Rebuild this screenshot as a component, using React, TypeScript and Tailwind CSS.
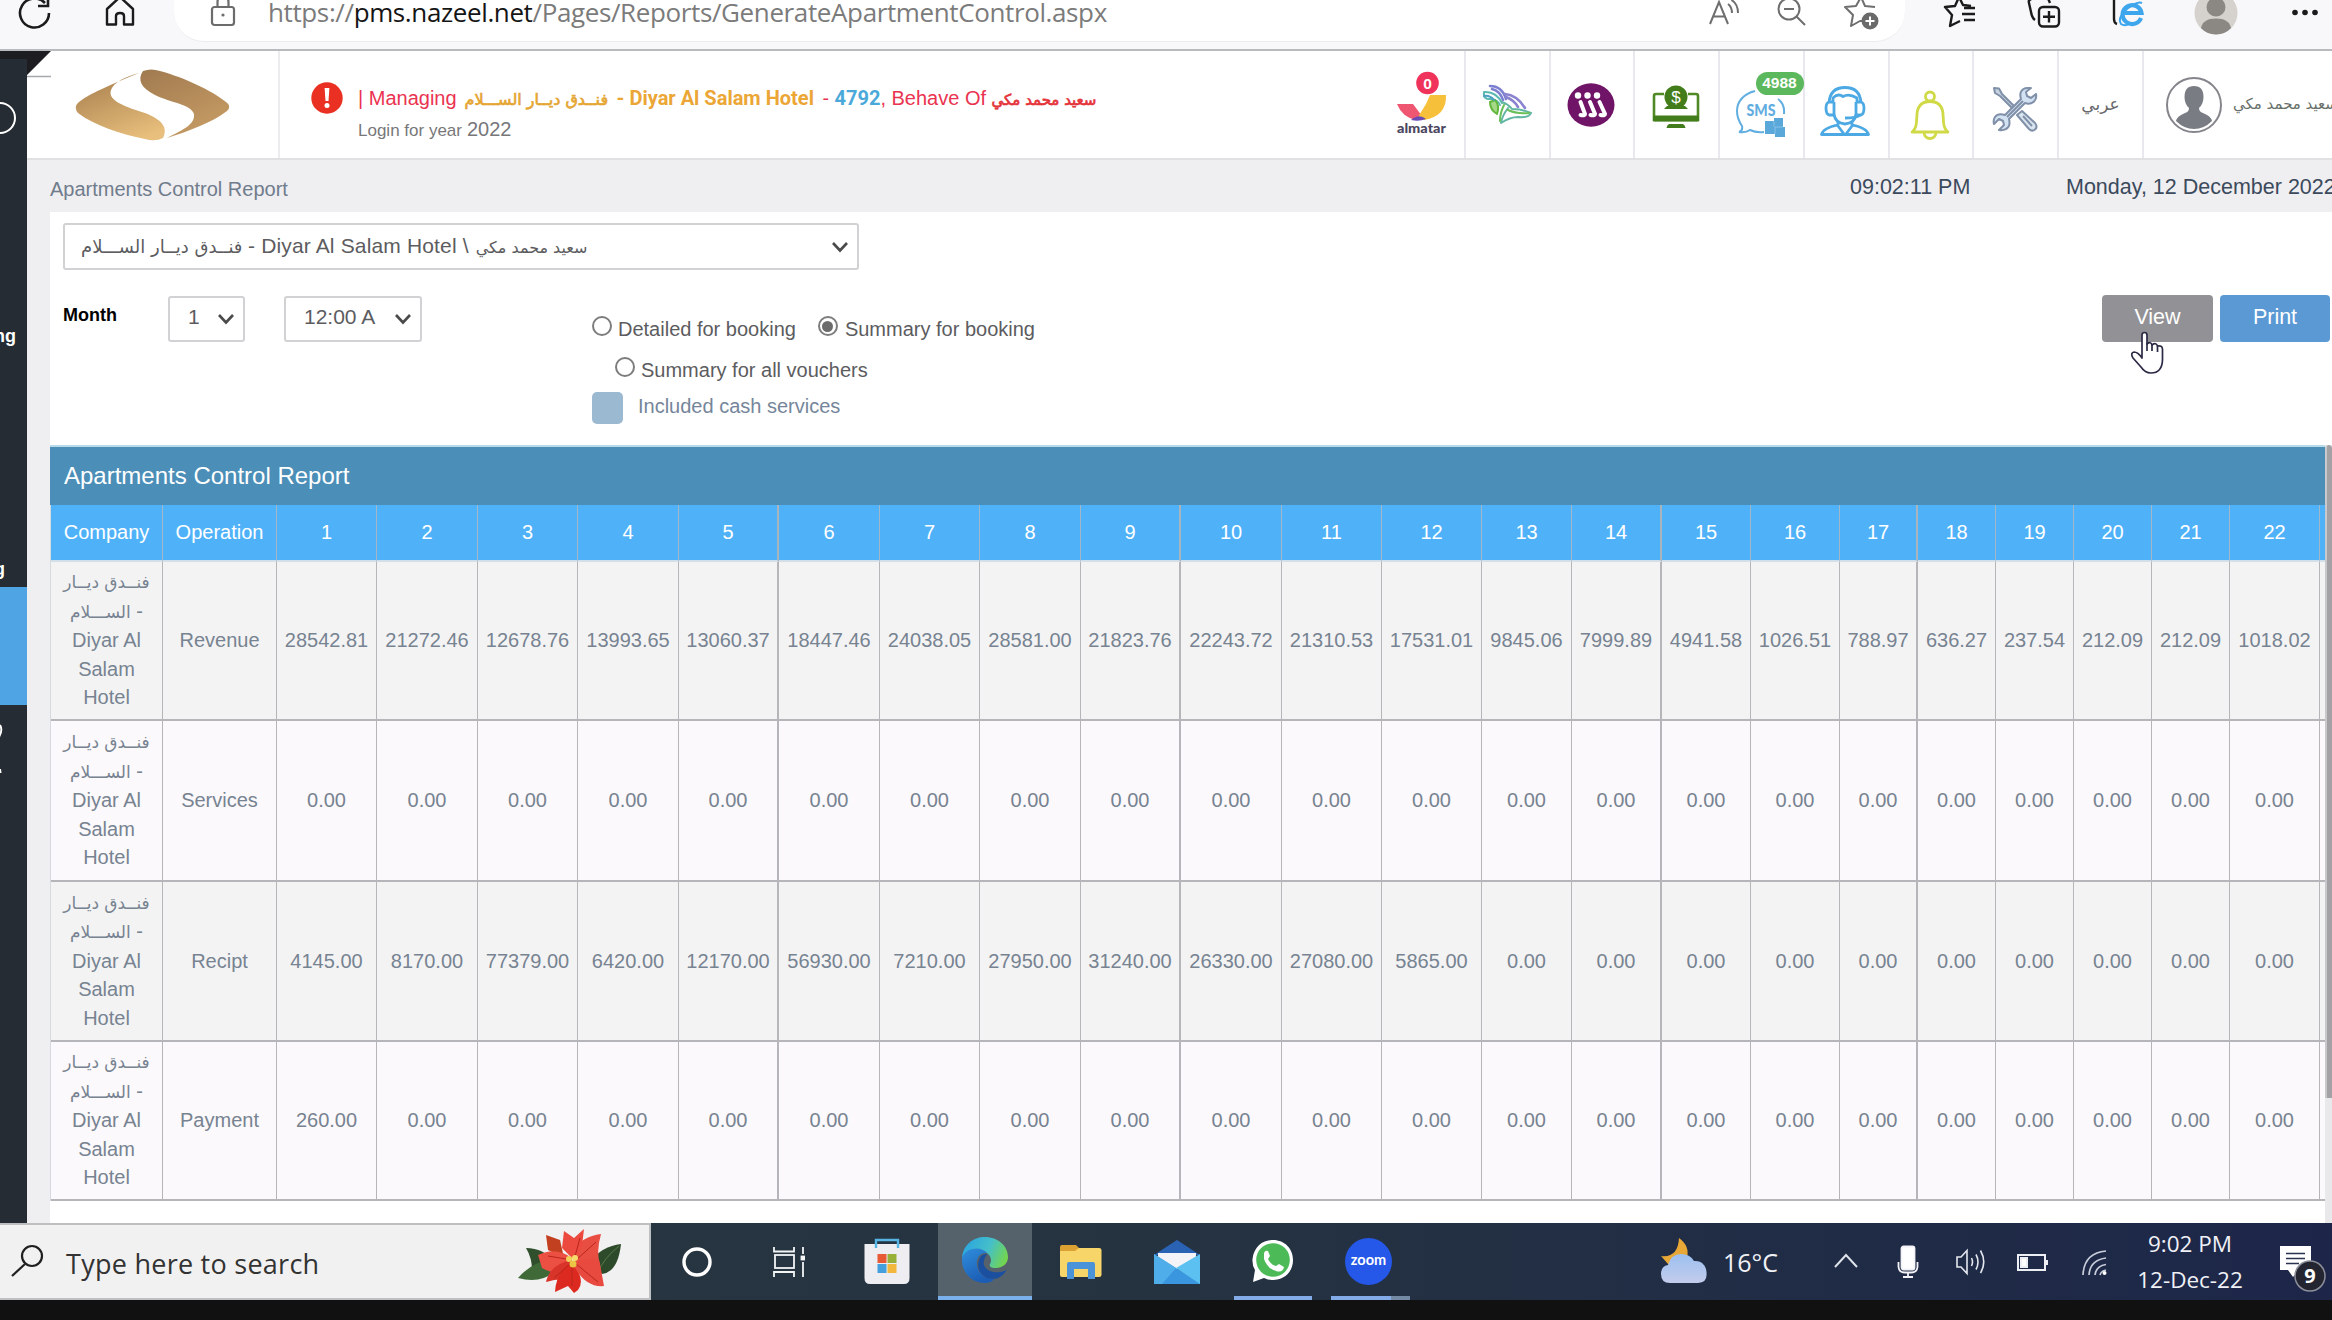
import React from "react";

const LATIN = "font-['Liberation_Sans','DejaVu_Sans',sans-serif]";
const SEGOE = "font-['Open_Sans','Noto_Sans',sans-serif]";

/* ---------- Browser toolbar ---------- */

function BrowserBar() {
  return (
    <div className="flex h-[49px] w-full shrink-0 overflow-hidden bg-[#f8f7fa]">
      <svg className="ml-[17px] h-[30px] w-[38px] shrink-0" viewBox="0 0 38 30" fill="none" stroke="#1b1b1b" strokeWidth="2.6">
        <path d="M28 3 A14.5 14.5 0 1 0 32 13" />
        <path d="M31 -3 V6 H21" />
      </svg>
      <svg className="ml-[49px] h-[30px] w-[32px] shrink-0" viewBox="0 0 32 30" fill="none" stroke="#1b1b1b" strokeWidth="2.4" strokeLinejoin="round">
        <path d="M3 9 L16 -3 L29 9 V24.5 H20 V16 Q20 13 16 13 Q12 13 12 16 V24.5 H3 Z" />
      </svg>
      <div className="ml-[38px] flex h-[42px] w-[1731px] shrink-0 items-start overflow-hidden rounded-b-[30px] border-b border-[#ececee] bg-white">
        <svg className="ml-[36px] h-[28px] w-[26px] shrink-0" viewBox="0 0 26 28" fill="none" stroke="#6c6c6c" strokeWidth="2.2">
          <rect x="2" y="7" width="22" height="18" rx="2.5" />
          <path d="M7.5 7 V2 Q7.5 -3 13 -3 Q18.500 -3 18.500 2 V7" />
          <circle cx="13" cy="15" r="1.6" fill="#6c6c6c" stroke="none" />
        </svg>
        <div className={`${SEGOE} ml-[32px] w-[1439px] shrink-0 text-[26px] leading-[25px] tracking-[-0.38px] whitespace-nowrap text-[#7b7b7b]`}>
          <span>https://</span>
          <span className="text-[#151515]">pms.nazeel.net</span>
          <span>/Pages/Reports/GenerateApartmentControl.aspx</span>
        </div>
        <svg className="h-[28px] w-[34px] shrink-0" viewBox="0 0 34 28" fill="none" stroke="#6e6e6e" strokeWidth="2">
          <path d="M3 24 L12 2 L21 24 M6 16.500 H18" />
          <path d="M21 4 Q25 7 25 13 M24.500 0 Q31 4 31 13" />
        </svg>
        <svg className="ml-[35px] h-[28px] w-[32px] shrink-0" viewBox="0 0 32 28" fill="none" stroke="#6e6e6e" strokeWidth="2">
          <circle cx="13" cy="9" r="10.500" />
          <path d="M8 9 H18 M20.500 16.500 L29 25" />
        </svg>
        <svg className="ml-[36px] h-[31px] w-[38px] shrink-0" viewBox="0 0 38 31" fill="none" stroke="#6e6e6e" strokeWidth="2" strokeLinejoin="round">
          <path d="M20 21 L16 21 L7 26 L9 15 L1 7 L12 6 L17 -3 L21 6 L31 7" />
          <circle cx="26" cy="21" r="8.500" fill="#6a6a6a" stroke="none" />
          <path d="M26 16.500 V25.500 M21.500 21 H30.500" stroke="#fff" />
        </svg>
      </div>
      <svg className="ml-[38px] h-[30px] w-[36px] shrink-0" viewBox="0 0 36 30" fill="none" stroke="#1b1b1b" strokeWidth="2.4" strokeLinejoin="round">
        <path d="M17 21 L7 26 L9 15 L2 7 L12 6 L16 -3 L20 5 L28 6" />
        <path d="M21 8 H32 M19 14 H32 M21 20 H32" />
      </svg>
      <svg className="ml-[48px] h-[30px] w-[38px] shrink-0" viewBox="0 0 38 30" fill="none" stroke="#1b1b1b" strokeWidth="2.4" strokeLinejoin="round">
        <path d="M8 20 Q5 18 4 12 L2 3 Q1 0 4 -1 L20 -4 L23 3" />
        <rect x="12" y="7" width="20" height="19.500" rx="4" />
        <path d="M22 11 V22.500 M16 16.700 H28" />
      </svg>
      <svg className="ml-[47px] h-[30px] w-[36px] shrink-0" viewBox="0 0 36 30" fill="none">
        <path d="M5 24 Q2 23 2 19 V-3" stroke="#1b1b1b" strokeWidth="2.4" />
        <path d="M29 18 A9.500 9.500 0 1 1 29.500 13 H12" stroke="#3ea6ec" strokeWidth="4.200" />
        <path d="M30 3 Q25 1 15 9 Q5 18 9 24 Q13 27 20 23" stroke="#3ea6ec" strokeWidth="2" />
      </svg>
      <svg className="ml-[46px] h-[36px] w-[44px] shrink-0" viewBox="0 0 44 36">
        <circle cx="22" cy="13" r="21.500" fill="#d5d2ce" />
        <circle cx="22" cy="7" r="9.500" fill="#8b8783" />
        <path d="M7 28 Q9 18.500 22 18.500 Q35 18.500 37 28 Q31 34.500 22 34.500 Q13 34.500 7 28Z" fill="#8b8783" />
      </svg>
      <svg className="ml-[51px] h-[30px] w-[34px] shrink-0" viewBox="0 0 34 30" fill="#1b1b1b">
        <circle cx="6" cy="12.500" r="2.800" />
        <circle cx="16" cy="12.500" r="2.800" />
        <circle cx="26" cy="12.500" r="2.800" />
      </svg>
    </div>
  );
}

/* ---------- Left menu strip ---------- */

function SideStrip() {
  return (
    <div className={`${LATIN} flex w-[27px] shrink-0 flex-col overflow-hidden bg-[#252c33] text-[18px] font-bold text-white`}>
      <div className="h-[8px] shrink-0 bg-[#1c1d20]" />
      <svg className="mt-[42px] h-[34px] w-[18px] shrink-0" viewBox="0 0 18 34" fill="none">
        <circle cx="0" cy="17" r="15" stroke="#fff" strokeWidth="2" />
      </svg>
      <div className="mt-[189px] ml-[-6px] h-[24px] leading-[24px]">ng</div>
      <div className="mt-[209px] ml-[-6px] h-[24px] leading-[24px]">g</div>
      <div className="mt-[6px] h-[118px] shrink-0 bg-[#4fa5e3]" />
      <svg className="mt-[18px] h-[52px] w-[6px] shrink-0" viewBox="0 0 6 52" fill="none" stroke="#fff" strokeWidth="2">
        <path d="M0 2 Q3 7 -1 14" />
        <path d="M0 46 L0.500 50" />
      </svg>
    </div>
  );
}

/* ---------- Application header ---------- */

function Logo() {
  return (
    <svg className="h-[74px] w-[160px]" viewBox="0 0 160 74">
      <defs>
        <linearGradient id="goldL" x1="0.2" y1="0" x2="0.7" y2="1">
          <stop offset="0" stopColor="#a9804f" />
          <stop offset="1" stopColor="#e8bf7c" />
        </linearGradient>
        <linearGradient id="goldR" x1="0" y1="0" x2="0.6" y2="1">
          <stop offset="0" stopColor="#a07a50" />
          <stop offset="1" stopColor="#c59a63" />
        </linearGradient>
      </defs>
      <path d="M66 5 C40 16 14 26 4 36 Q1 40 5 45 C22 58 48 66 72 71 Q82 74 90 70 C95 60 90 52 72 45 C46 37 35 31 38 22 C41 14 52 9 66 5Z" fill="url(#goldL)" />
      <path d="M70 3 Q78 0 87 3 C112 10 138 22 153 34 Q159 38 154 43 C140 54 116 63 94 70 C112 61 122 56 121 46 C118 36 98 35 82 27 C68 20 64 12 70 3Z" fill="url(#goldR)" />
    </svg>
  );
}

function AlmatarIcon() {
  return (
    <svg className="h-[70px] w-[56px]" viewBox="0 0 56 70">
      <path d="M3 34 H19 L28 46 L22 50 Q8 47 3 34Z" fill="#ee5672" />
      <path d="M32 34 L36 25 H52 Q53 46 30 50 L24 47Z" fill="#f6c03a" />
      <path d="M17 50 Q25 43 32 49 Q25 52 17 50Z" fill="#6a4bb5" />
      <text x="27.500" y="63" textAnchor="middle" textLength="49" lengthAdjust="spacingAndGlyphs" fontFamily="Lato, sans-serif" fontWeight="900" fontSize="14" fill="#4b4660">almatar</text>
      <circle cx="33.500" cy="13" r="11.300" fill="#ef335b" />
      <text x="33.500" y="18.500" textAnchor="middle" fontFamily="Liberation Sans, sans-serif" fontWeight="700" fontSize="15.500" fill="#fff">0</text>
    </svg>
  );
}

function BirdIcon() {
  return (
    <svg className="h-[44px] w-[52px]" viewBox="0 0 52 44" fill="none" strokeLinecap="round" strokeLinejoin="round" strokeWidth="2">
      <path d="M8 3 Q20 3 24 16 M10 6 Q18 8 21 17" stroke="#7d7fd0" strokeWidth="2.600" />
      <path d="M2 9 Q14 8 20 20 M2 9 Q1 17 9 16 Q16 17 18 22" stroke="#5cb9b0" />
      <path d="M8 19 Q8 27 15 31 Q18 22 13 17 Z" stroke="#62b83e" fill="#a6d888" />
      <path d="M23 11 Q35 12 43 25 M24 14 Q32 17 36 24" stroke="#8a83cf" strokeWidth="2.600" />
      <path d="M20 19 Q26 21 30 26 Q40 26 49 30 Q47 35 36 34 Q28 34 19 40 Q20 33 26 25" stroke="#62b7a4" />
      <path d="M22 22 Q18 30 18 38 M26 27 Q34 31 47 30" stroke="#69bf5a" />
      <path d="M2 13 Q8 12 12 17" stroke="#4f9fc4" />
    </svg>
  );
}

function PurpleIcon() {
  return (
    <svg className="h-[46px] w-[48px]" viewBox="0 0 48 46" fill="none" stroke="#fff" strokeWidth="4" strokeLinecap="round">
      <ellipse cx="24" cy="23" rx="23.500" ry="21.700" fill="#701467" stroke="none" />
      <circle cx="11" cy="13.500" r="3.200" fill="#fff" stroke="none" />
      <circle cx="20.500" cy="13.500" r="3.200" fill="#fff" stroke="none" />
      <circle cx="30" cy="13.500" r="3.200" fill="#fff" stroke="none" />
      <path d="M13.500 20 L18 32 Q18 34 13.500 33" />
      <path d="M23 20 L28 32 Q28 34 23.500 33" />
      <path d="M32.500 20 L38 32 Q38 34 33.500 33" />
    </svg>
  );
}

function PayMonitorIcon() {
  return (
    <svg className="h-[46px] w-[48px]" viewBox="0 0 48 46" fill="none">
      <path d="M12 10 H4 Q2 10 2 12 V36 H46 V12 Q46 10 44 10 H36" stroke="#508a26" strokeWidth="2.600" />
      <rect x="1" y="31.500" width="46" height="6" rx="1.500" fill="#427c1b" />
      <path d="M17 40 H31 Q33 41 33.500 44 H14.500 Q15 41 17 40Z" fill="#427c1b" />
      <circle cx="24" cy="13" r="11.500" fill="#427c1b" />
      <path d="M15 22 H33 L36 25 H12Z" fill="#427c1b" />
      <text x="24" y="19" textAnchor="middle" fontFamily="Liberation Sans, sans-serif" fontSize="17" fill="#fff">$</text>
    </svg>
  );
}

function SmsIcon() {
  return (
    <div className="relative flex h-[66px] w-[50px] items-end">
      <svg className="h-[50px] w-[50px]" viewBox="0 0 50 50" fill="none">
        <path d="M19 3 C7 6 1 14 1 23 C1 30 4 35 6 38 Q7 43 3 44 Q10 45 14 42 Q20 45 28 44 M42 11 Q49 16 48 26" stroke="#61aee0" strokeWidth="2" />
        <text x="25" y="28" textAnchor="middle" textLength="29" lengthAdjust="spacingAndGlyphs" fontFamily="Lato, sans-serif" fontWeight="900" fontSize="16" fill="#62ade0">SMS</text>
        <path d="M29 33 L38 33 V30 H47 V39 H49 V49 H39 V46 H29Z" fill="#5aa7da" />
        <path d="M38 33 V39 M39 46 V39 H47" stroke="#86c1e8" />
      </svg>
      <div className={`${LATIN} absolute top-0 left-[20px] flex h-[23px] w-[48px] items-center justify-center rounded-full bg-[#5cb85c] text-[15.500px] font-bold text-white`}>4988</div>
    </div>
  );
}

function SupportIcon() {
  return (
    <svg className="h-[50px] w-[50px]" viewBox="0 0 50 50" fill="none" stroke="#4da9e4" strokeWidth="2.800" strokeLinejoin="round">
      <path d="M9 17 Q10 1.500 25 1.500 Q40 1.500 41 17" />
      <path d="M13 17 V12 Q18 7 23 10.500 Q29 7 37 12 V17" />
      <path d="M14 16 V28 Q15 37 25 38 Q35 37 36 28 V16" />
      <path d="M14 16 H9 Q6 17 6 22 Q6 28 9 29 H14 M36 16 H41 Q44 17 44 22 Q44 28 41 29 H36" />
      <path d="M40 29 Q37 32 25 32" />
      <path d="M18 36 V40 L24 48 M32 36 V40 L26 48 M18 39 Q3 42 1.500 48.500 H48.500 Q47 42 32 39" />
    </svg>
  );
}

function BellIcon() {
  return (
    <svg className="h-[50px] w-[40px]" viewBox="0 0 40 50" fill="none" stroke="#d0d946" strokeWidth="2.800" strokeLinejoin="round">
      <circle cx="20" cy="6.500" r="4.500" />
      <path d="M2 42 H38 Q34 39 33.500 32 L33 24 Q32 11.500 20 11.500 Q8 11.500 7 24 L6.500 32 Q6 39 2 42Z" />
      <path d="M14 43 Q15 48.500 20 48.500 Q25 48.500 26 43" />
    </svg>
  );
}

function ToolsIcon() {
  return (
    <svg className="h-[46px] w-[46px]" viewBox="0 0 46 46" strokeLinejoin="round" strokeWidth="2" stroke="#7f90a8">
      <path d="M2 2 L7 2.500 L10 8 L24 22 L22 24 L8 10 L3 7Z" fill="#c8d4e2" />
      <path d="M25 29 L30 25 L43 37 Q46 41 43 43.500 Q40 46 37 43Z" fill="#dbe5f0" />
      <path d="M31 30 L40 40" />
      <path d="M36 2 Q30 2 28.500 7 Q28 10 29 13 L13 29 Q6 27 3 31 Q1 34 2 38 L7 33 L11 35 L12 39 L7 44 Q14 45 17 40 Q18 37 17 33 L33 17 Q38 19 42 15.500 Q45 12 44 8 L39 12 L35 10 L34 6 L39 2Z" fill="#d3e2f2" />
      <path d="M15 31 L31 15" />
    </svg>
  );
}

function UserAvatar() {
  return (
    <svg className="h-[58px] w-[58px] shrink-0" viewBox="0 0 58 58">
      <circle cx="29" cy="29" r="27" fill="#fff" stroke="#85858c" strokeWidth="2" />
      <path d="M29 10 Q38.500 10 38.500 21 Q38.500 28 34 32 Q34 36 38 37 Q46 40 47 45 Q39 53 29 53 Q19 53 11 45 Q12 40 20 37 Q24 36 24 32 Q19.500 28 19.500 21 Q19.500 10 29 10Z" fill="#7a7c84" />
    </svg>
  );
}

const TOOLBAR = [
  { id: "almatar", node: <AlmatarIcon />, cell: "w-[85px] pr-[2px]" },
  { id: "bird", node: <BirdIcon />, cell: "w-[85px]" },
  { id: "purple", node: <PurpleIcon />, cell: "w-[84px] pr-[2px]" },
  { id: "pay", node: <PayMonitorIcon />, cell: "w-[85px] pt-[4px] pr-[2px]" },
  { id: "sms", node: <SmsIcon />, cell: "w-[85px] pr-[2px]" },
  { id: "support", node: <SupportIcon />, cell: "w-[85px] pt-[13px] pr-[3px]" },
  { id: "bell", node: <BellIcon />, cell: "w-[84px] pt-[20px] pr-[2px]" },
  { id: "tools", node: <ToolsIcon />, cell: "w-[85px] pt-[8px] pr-[2px]" },
];

function AppHeader() {
  return (
    <div className="flex h-[109px] shrink-0 overflow-hidden border-b-2 border-[#e1e1e4] bg-white">
      <div className="flex w-[253px] shrink-0 items-start border-r-2 border-[#ececef]">
        <svg className="h-[27px] w-[25px] shrink-0" viewBox="0 0 25 27">
          <path d="M0 0 H24 L0 24Z" fill="#1d1d21" />
          <path d="M0 25.500 H24" stroke="#a5a8ad" strokeWidth="1.500" />
        </svg>
        <div className="mt-[17px] ml-[21px]">
          <Logo />
        </div>
      </div>
      <div className="flex w-[1101px] shrink-0">
        <svg className="mt-[31px] ml-[31px] h-[32px] w-[32px] shrink-0" viewBox="0 0 32 32">
          <circle cx="16" cy="16" r="15.700" fill="#e93022" />
          <path d="M13.600 6 H18.400 L17.500 19 H14.500Z" fill="#fff" />
          <circle cx="16" cy="23.500" r="2.500" fill="#fff" />
        </svg>
        <div className="mt-[31px] ml-[15px]">
          <div className="flex h-[33px] items-baseline whitespace-pre font-['Roboto','Liberation_Sans',sans-serif] text-[20px] leading-[33px] text-[#ea3350]">
            <span className={LATIN}>| Managing</span>
            <span className="ml-[8px] w-[151px] font-['DejaVu_Sans'] text-[16px] text-[#e5a633] [-webkit-text-stroke:0.7px]">فنــدق ديــار الســـلام</span>
            <span className="ml-px font-bold text-[#eba636]">- Diyar Al Salam Hotel</span>
            <span className="ml-[9px]">-</span>
            <span className="ml-[6px] font-bold text-[#4ba9da]">4792</span>
            <span className={LATIN}>, Behave Of </span>
            <span className="font-['DejaVu_Sans'] text-[15px] text-[#e5333a] [-webkit-text-stroke:0.7px]">سعيد محمد مكي</span>
          </div>
          <div className={`${LATIN} flex items-baseline leading-[28px] text-[#77777a]`}>
            <span className="text-[17px]">Login for year</span>
            <span className="ml-[5px] text-[20px]">2022</span>
          </div>
        </div>
      </div>
      {TOOLBAR.map((t) => (
        <div key={t.id} className={`${t.cell} flex shrink-0 items-center justify-center border-r-2 border-[#e8e8ee]`}>
          {t.node}
        </div>
      ))}
      <div className="flex w-[85px] shrink-0 items-center justify-center border-r-2 border-[#e8e8ee] font-['DejaVu_Sans'] text-[17px] text-[#6a6a6e]">عربي</div>
      <div className="flex w-[200px] shrink-0 items-center pl-[21px]">
        <UserAvatar />
        <span className="ml-[10px] font-['DejaVu_Sans'] text-[15px] whitespace-nowrap text-[#67706a]">سعيد محمد مكي</span>
      </div>
    </div>
  );
}

/* ---------- Filter form ---------- */

function Chevron() {
  return (
    <svg className="h-[12px] w-[18px] shrink-0" viewBox="0 0 18 12" fill="none" stroke="#4a4a4a" strokeWidth="2.600">
      <path d="M2 2 L9 9.500 L16 2" />
    </svg>
  );
}

function Radio({ checked }: { checked?: boolean }) {
  return (
    <span className="flex h-[20px] w-[20px] shrink-0 items-center justify-center rounded-full border-2 border-[#7d7d7d] bg-white">
      {checked && <span className="h-[11px] w-[11px] rounded-full bg-[#6c6c6c]" />}
    </span>
  );
}

function Filters() {
  return (
    <div className={`${LATIN} flex h-[233px] shrink-0 flex-col bg-white pt-[11px] pl-[13px] text-[20px] text-[#5c5c60]`}>
      <div className="flex h-[47px] w-[796px] items-center justify-between rounded-[3px] border-2 border-[#d2d2d4] pr-[8px] pl-[16px] text-[21px] whitespace-pre">
        <div className="mb-[2px] flex items-baseline">
          <span className="w-[167px] font-['DejaVu_Sans'] text-[18px]">فنــدق ديــار الســـلام</span>
          <span className="tracking-[0.15px]">- Diyar Al Salam Hotel \ </span>
          <span className="ml-[1px] font-['DejaVu_Sans'] text-[16px]">سعيد محمد مكي</span>
        </div>
        <Chevron />
      </div>
      <div className="flex">
        <div className="mt-[33px] w-[105px] text-[18px] leading-[24px] font-bold text-black">Month</div>
        <div className="mt-[26px] flex h-[46px] w-[77px] items-center justify-between rounded-[3px] border-2 border-[#d2d2d4] pr-[8px] pl-[18px] text-[21px]">
          <span className="mb-[4px]">1</span>
          <Chevron />
        </div>
        <div className="mt-[26px] ml-[39px] flex h-[46px] w-[138px] items-center justify-between rounded-[3px] border-2 border-[#d2d2d4] pr-[8px] pl-[18px] text-[21px]">
          <span className="mb-[4px]">12:00 A</span>
          <Chevron />
        </div>
        <div className="ml-[170px] flex w-[800px] flex-col">
          <div className="mt-[46px] flex h-[24px]">
            <Radio />
            <span className="ml-[6px] leading-[26px]">Detailed for booking</span>
            <span className="ml-[22px] flex"><Radio checked /></span>
            <span className="ml-[7px] leading-[26px]">Summary for booking</span>
          </div>
          <div className="mt-[17px] ml-[23px] flex h-[24px]">
            <Radio />
            <span className="ml-[6px] leading-[26px]">Summary for all vouchers</span>
          </div>
          <div className="mt-[11px] flex h-[32px]">
            <span className="h-[32px] w-[31px] rounded-[5px] bg-[#9bb9d1]" />
            <span className="ml-[15px] leading-[28px] text-[#75869a]">Included cash services</span>
          </div>
        </div>
        <div className="mt-[25px] ml-[710px] flex gap-[7px] text-[21.500px] text-white">
          <div className="relative flex h-[47px] w-[111px] items-center justify-center rounded-[4px] bg-[#929195] pb-[2px]">
            View
            <svg className="absolute top-[36px] left-[28px] h-[44px] w-[35px]" viewBox="0 0 35 44" fill="#fff" stroke="#2a2a45" strokeWidth="1.700" strokeLinejoin="round">
              <path d="M12 4 Q12 1.500 14.500 1.500 Q17 1.500 17 4 V13 Q21 10 22 14 Q26 11 27.500 15 Q32 14 32.500 18 V29 Q32 42 21 42 Q15 42 11 36 L3 27 Q0 22 4 21 Q8 21 12 27Z" />
              <path d="M17 12 V20 M22 14 V20 M27.500 15 V21" fill="none" />
            </svg>
          </div>
          <div className="flex h-[47px] w-[110px] items-center justify-center rounded-[4px] bg-[#5b99d4] pb-[2px]">Print</div>
        </div>
      </div>
    </div>
  );
}

/* ---------- Report table ---------- */

const COLS = [112, 114, 100, 101, 100, 101, 100, 101, 100, 101, 100, 101, 100, 100, 90, 90, 89, 89, 78, 78, 78, 78, 78, 90, 6];

const ROWS = [
  {
    op: "Revenue",
    h: "h-[159px]",
    bg: "bg-[#f3f3f4]",
    values: "28542.81 21272.46 12678.76 13993.65 13060.37 18447.46 24038.05 28581.00 21823.76 22243.72 21310.53 17531.01 9845.06 7999.89 4941.58 1026.51 788.97 636.27 237.54 212.09 212.09 1018.02".split(" "),
  },
  { op: "Services", h: "h-[161px]", bg: "bg-[#fbf9fb]", values: Array<string>(22).fill("0.00") },
  {
    op: "Recipt",
    h: "h-[160px]",
    bg: "bg-[#f3f3f4]",
    values: "4145.00 8170.00 77379.00 6420.00 12170.00 56930.00 7210.00 27950.00 31240.00 26330.00 27080.00 5865.00 0.00 0.00 0.00 0.00 0.00 0.00 0.00 0.00 0.00 0.00".split(" "),
  },
  { op: "Payment", h: "h-[159px]", bg: "bg-[#fbf9fb]", values: ["260.00", ...Array<string>(21).fill("0.00")] },
];

const STRONG = new Set([5, 9, 14, 17]);

function ReportTable() {
  return (
    <div className={`${LATIN} flex grow`}>
      <div className="w-[2275px] shrink-0">
        <div className="h-[60px] border-t-2 border-[#b9dbe9] bg-[#4b8eb7] pl-[14px] text-[24px] leading-[58px] text-white">Apartments Control Report</div>
        <table className="w-[2275px] table-fixed border-separate border-spacing-0 border-l border-[#d4dade] text-center text-[20px] text-[#778391]">
          <colgroup>
            {COLS.map((w, i) => (
              <col key={i} style={{ width: w }} />
            ))}
          </colgroup>
          <thead>
            <tr className="h-[57px] bg-[#4fb2f9] text-white">
              {["Company", "Operation", ...Array.from({ length: 22 }, (_, i) => String(i + 1)), ""].map((h, i) => (
                <th key={i} className={`border-b-2 border-b-[#d3dfe8] p-0 pb-px font-normal ${i === 24 ? "" : STRONG.has(i - 1) ? "border-r-2 border-r-[#a9b4bd]" : "border-r border-r-[#a2b6c6]"}`}>
                  {h}
                </th>
              ))}
            </tr>
          </thead>
          <tbody>
            {ROWS.map((r) => (
              <tr key={r.op} className={`${r.h} ${r.bg}`}>
                <td className="border-r border-b-2 border-[#b6b6ba] p-0 pb-px leading-[28.500px]">
                  <div className="font-['DejaVu_Sans'] text-[17px]">فنــدق ديــار</div>
                  <div><span className="font-['DejaVu_Sans'] text-[17px]">الســـلام</span> -</div>
                  <div>Diyar Al</div>
                  <div>Salam</div>
                  <div>Hotel</div>
                </td>
                <td className="border-r border-b-2 border-[#b6b6ba] p-0 pb-px">{r.op}</td>
                {r.values.map((v, i) => (
                  <td key={i} className={`border-b-2 border-[#b6b6ba] p-0 pb-px ${STRONG.has(i + 1) ? "border-r-2" : "border-r"}`}>
                    {v}
                  </td>
                ))}
                <td className="border-b-2 border-[#b6b6ba] p-0" />
              </tr>
            ))}
          </tbody>
        </table>
      </div>
      <div className="w-[7px] bg-[#e9e9ec]">
        <div className="h-[653px] rounded-t-[4px] border-l-2 border-[#c9c9cc] bg-[#a3a1a5]" />
      </div>
    </div>
  );
}

/* ---------- Windows taskbar ---------- */

function Poinsettia() {
  return (
    <svg className="h-[66px] w-[104px]" viewBox="0 0 104 66">
      <path d="M8 20 Q26 20 36 34 Q26 44 14 42 Q14 30 8 20Z" fill="#30502d" />
      <path d="M0 50 Q14 34 32 32 L36 44 Q22 56 0 50Z" fill="#3f6a38" />
      <path d="M103 16 Q84 18 72 34 L84 46 Q100 44 103 16Z" fill="#2d4a2a" />
      <path d="M101 18 Q86 30 80 44" stroke="#597a4a" fill="none" />
      <path d="M28 7 L42 12 L46 30 L30 22Z" fill="#c2401f" />
      <path d="M83 6 Q64 8 54 24 L60 38 L82 36 Q78 24 83 6Z" fill="#e84f42" />
      <path d="M46 3 L56 10 L66 1 L64 18 L56 32 L44 20Z" fill="#ec4a3e" />
      <path d="M20 27 Q38 18 54 30 L50 46 Q34 46 24 40Z" fill="#ec5043" />
      <path d="M28 54 Q32 36 54 32 L54 52 Q40 50 28 54Z" fill="#d93429" />
      <path d="M37 64 Q38 44 54 34 Q68 52 60 62 L56 65 L50 58Z" fill="#dc2a20" />
      <path d="M86 58 Q66 60 54 34 Q82 26 82 36Z" fill="#e84a3f" />
      <path d="M54 32 L30 28 M56 32 L62 10 M57 33 L78 14 M57 35 L80 54 M52 36 L36 50 M54 36 L54 58" stroke="#b8251d" strokeWidth="1" fill="none" />
      <circle cx="51" cy="31" r="3" fill="#f3d25a" />
      <circle cx="57" cy="30" r="3" fill="#f7dc6c" />
      <circle cx="55" cy="36" r="3.500" fill="#edc544" />
    </svg>
  );
}

function EdgeIcon() {
  return (
    <svg className="h-[48px] w-[48px]" viewBox="0 0 48 48">
      <defs>
        <linearGradient id="edgeTop" x1="0" y1="0.3" x2="1" y2="0.6">
          <stop offset="0" stopColor="#2aa5e0" />
          <stop offset="0.550" stopColor="#45bfc9" />
          <stop offset="1" stopColor="#74d64c" />
        </linearGradient>
        <linearGradient id="edgeBody" x1="0" y1="0" x2="0.5" y2="1">
          <stop offset="0" stopColor="#2f8fdc" />
          <stop offset="1" stopColor="#1c5cb5" />
        </linearGradient>
      </defs>
      <path d="M1 22 C2 9 12 1 24 1 C37 1 47 10 47 21 C47 28 41 32 35 32 C29 32 28 30 29 28 C31 25 30 20 26 17 C19 11 6 12 1 22Z" fill="url(#edgeTop)" />
      <path d="M1 22 C5 11 20 10 26 17 C19 16 15 22 16 29 C17 38 25 43 33 43 C31 46 27 47 24 47 C11 47 1 37 1 24Z" fill="url(#edgeBody)" />
      <path d="M18 24 C14 35 24 46 37 42 Q43 39 45.500 34 C38 38 26 37 23 29 C22 25 24 21 26 18 C22 18 19 20 18 24Z" fill="#1b4f9f" />
    </svg>
  );
}

function StoreIcon() {
  return (
    <svg className="h-[48px] w-[46px]" viewBox="0 0 46 48">
      <path d="M12 11 V3 H34 V11" fill="none" stroke="#57b5e6" strokeWidth="2.400" />
      <path d="M0.500 7 H45.500 V41 Q45.500 47 40 47 H6 Q0.500 47 0.500 41Z" fill="#ededf2" />
      <path d="M12 7 V11 M34 7 V11" stroke="#57b5e6" strokeWidth="2.400" />
      <rect x="13.500" y="17" width="9" height="9" fill="#e85a35" />
      <rect x="23.500" y="17" width="9" height="9" fill="#97b03a" />
      <rect x="13.500" y="27" width="9" height="9" fill="#449fdc" />
      <rect x="23.500" y="27" width="9" height="9" fill="#f3b73d" />
    </svg>
  );
}

function FolderIcon() {
  return (
    <svg className="h-[36px] w-[42px]" viewBox="0 0 42 36">
      <path d="M0 3 Q0 1 2 1 H16 L20 5 H38 V12 H0Z" fill="#dba233" />
      <path d="M0 7 H15 L19 4 H39 Q41.500 4 41.500 6 V31 Q41.500 33 39 33 H2 Q0 33 0 31Z" fill="#f8d568" />
      <path d="M7 35 V20 Q7 18 9 18 H33 Q35 18 35 20 V35 H28 V25 H14 V35Z" fill="#4b93d8" />
    </svg>
  );
}

function MailIcon() {
  return (
    <svg className="h-[46px] w-[46px]" viewBox="0 0 46 46">
      <path d="M0 16 L23 1 L46 16Z" fill="#2a62b4" />
      <path d="M4 14 H42 V30 H4Z" fill="#f4f4f8" />
      <path d="M0 15 L22 29 L46 44 V45 H0Z" fill="#3a96df" />
      <path d="M46 15 L22 29 L46 45Z" fill="#5cc1f0" />
      <path d="M0 15 L22 29 L8 45 H0Z" fill="#4faeea" />
    </svg>
  );
}

function WhatsAppIcon() {
  return (
    <svg className="h-[44px] w-[42px]" viewBox="0 0 42 44">
      <path d="M1 43 L3 31 Q0 26 0.500 20 C2 8 10 1 21 1 C33 1 41 10 41 21 C41 33 32 41 21 41 Q16 41 12 39Z" fill="#fff" />
      <circle cx="21" cy="21" r="16.800" fill="#4dba58" />
      <path d="M12 14 Q13 11 16 12 L18 17 L16 20 Q19 26 24 27 L27 25 L32 28 Q31 33 26 32.500 Q16 31 12 20 Z" fill="#fff" />
    </svg>
  );
}

function WeatherIcon() {
  return (
    <svg className="h-[46px] w-[48px]" viewBox="0 0 48 46">
      <defs>
        <linearGradient id="cloud" x1="0" y1="0" x2="0" y2="1">
          <stop offset="0" stopColor="#9cc0f0" />
          <stop offset="1" stopColor="#c3ccec" />
        </linearGradient>
      </defs>
      <path d="M19 0 Q30 8 27 20 Q20 30 8 26 L1 18 Q18 20 19 0Z" fill="#e8a837" />
      <path d="M10 45 Q1 45 1 36 Q1 28 8 27 Q11 16 21 16 Q30 16 34 23 Q43 22 46 31 Q49 45 38 45Z" fill="url(#cloud)" />
    </svg>
  );
}

function Taskbar() {
  return (
    <div className="flex h-[77px] w-full shrink-0 bg-linear-to-r from-[#293741] via-[#253341] to-[#1d2649]">
      <div className="flex h-[77px] w-[651px] shrink-0 border-y-2 border-r-2 border-[#bdbfc0] bg-[#f2f1f1]">
        <svg className="mt-[19px] ml-[11px] h-[34px] w-[34px] shrink-0" viewBox="0 0 34 34" fill="none" stroke="#1f1f1f" strokeWidth="2.200">
          <circle cx="21" cy="12" r="10" />
          <path d="M14 20 L1 32" />
        </svg>
        <div className={`${SEGOE} mt-[20px] ml-[21px] w-[452px] text-[27px] leading-[38px] tracking-[0.26px] whitespace-nowrap text-[#333]`}>Type here to search</div>
        <div className="mt-[3px]">
          <Poinsettia />
        </div>
      </div>
      <div className="flex w-[92px] shrink-0 items-center justify-center">
        <svg className="h-[32px] w-[32px]" viewBox="0 0 32 32" fill="none" stroke="#fff" strokeWidth="3.400">
          <circle cx="16" cy="16" r="13" />
        </svg>
      </div>
      <div className="flex w-[92px] shrink-0 items-center justify-center">
        <svg className="h-[32px] w-[32px]" viewBox="0 0 32 32" fill="none" stroke="#f2f4f5" strokeWidth="1.800">
          <rect x="2" y="9" width="19" height="13" />
          <path d="M1 1 V5.500 H21 V1 M1 31 V26 H21 V31 M30 1 V8 M30 16 V31" />
          <rect x="28.500" y="10.500" width="3" height="3" fill="#fff" />
        </svg>
      </div>
      <div className="flex w-[103px] shrink-0 items-center justify-center pb-[1px]">
        <StoreIcon />
      </div>
      <div className="flex w-[94px] shrink-0 items-center justify-center border-b-4 border-[#7ab1ec] bg-[#55626b]">
        <EdgeIcon />
      </div>
      <div className="flex w-[97px] shrink-0 items-center justify-center">
        <FolderIcon />
      </div>
      <div className="flex w-[95px] shrink-0 items-center justify-center">
        <MailIcon />
      </div>
      <div className="ml-[10px] flex w-[78px] shrink-0 items-center justify-center border-b-4 border-[#83abe8] pt-[2px]">
        <WhatsAppIcon />
      </div>
      <div className="ml-[19px] flex w-[79px] shrink-0 flex-col">
        <div className="mt-[15px] ml-[14px] flex h-[47px] w-[47px] items-center justify-center rounded-full bg-[#2557e8] pb-[3px] font-['Lato',sans-serif] text-[14.500px] font-bold text-white">zoom</div>
        <div className="mt-auto flex h-[4px]">
          <div className="w-[60px] bg-[#83abe8]" />
          <div className="w-[19px] bg-[#7389a4]" />
        </div>
      </div>
      <div className="mt-[15px] ml-[250px] shrink-0">
        <WeatherIcon />
      </div>
      <div className={`${SEGOE} mt-[20px] ml-[15px] w-[92px] shrink-0 text-[25px] leading-[38px] text-[#f0f1f5]`}>16°C</div>
      <svg className="mt-[29px] ml-[18px] h-[18px] w-[26px] shrink-0" viewBox="0 0 26 18" fill="none" stroke="#dfe3ea" strokeWidth="2">
        <path d="M2 15 L13 3 L24 15" />
      </svg>
      <svg className="mt-[22px] ml-[38px] h-[34px] w-[22px] shrink-0" viewBox="0 0 22 34" fill="none" stroke="#f4f4f8" strokeWidth="1.800">
        <rect x="4.500" y="1.500" width="13" height="23" rx="2" fill="#fff" />
        <path d="M1.500 17 V22 Q2 27.500 8 27.500 H14 Q20 27.500 20.500 22 V17 M11 27.500 V32 M6 32 H16" />
      </svg>
      <svg className="mt-[25px] ml-[36px] h-[28px] w-[32px] shrink-0" viewBox="0 0 32 28" fill="none" stroke="#e4e7ee" strokeWidth="1.600">
        <path d="M2 9 H6 L12 2.500 V25.500 L6 19 H2Z" />
        <path d="M16.500 10 Q18.500 14 16.500 18 M21 6.500 Q25 14 21 21.500 M25.500 2.500 Q32 14 25.500 25" />
      </svg>
      <svg className="mt-[30px] ml-[29px] h-[20px] w-[34px] shrink-0" viewBox="0 0 34 20" fill="none" stroke="#eceef3" strokeWidth="2">
        <rect x="2" y="2" width="27" height="15" />
        <rect x="5" y="5" width="6" height="9" fill="#fff" />
        <path d="M31 7 V12" />
      </svg>
      <svg className="mt-[26px] ml-[31px] h-[28px] w-[28px] shrink-0" viewBox="0 0 28 28" fill="none" stroke="#c9cedb" strokeWidth="1.700">
        <path d="M2 26 Q3 4 25 2 M8 26 Q9 11 25 9 M14 26 Q15 17 25 15.500" />
        <path d="M19 26 Q20 22 25 21" />
        <circle cx="23.500" cy="24" r="2" fill="#fff" stroke="none" />
      </svg>
      <div className={`${SEGOE} ml-[24px] flex w-[114px] shrink-0 flex-col items-center pt-[3px] text-[22.500px] leading-[36px] whitespace-nowrap text-[#f0f1f6]`}>
        <span>9:02 PM</span>
        <span>12-Dec-22</span>
      </div>
      <svg className="mt-[22px] ml-[32px] h-[52px] w-[50px] shrink-0" viewBox="0 0 50 52">
        <path d="M1 1 H32 V25 H20 L14 32 L9 25 H1Z" fill="#fff" />
        <path d="M7 8.500 H26 M7 13.500 H26 M7 18.500 H20" stroke="#2b3350" strokeWidth="1.600" />
        <circle cx="31" cy="31" r="15" fill="#232530" stroke="#8d909b" strokeWidth="1.500" />
        <text x="31" y="38" textAnchor="middle" fontFamily="Open Sans, sans-serif" fontWeight="700" fontSize="20" fill="#fff">9</text>
      </svg>
    </div>
  );
}

export default function App() {
  return (
    <div className="flex h-[1320px] w-[2332px] flex-col overflow-hidden bg-[#111111]">
      <BrowserBar />
      <div className="h-[2px] shrink-0 bg-[#b9babd]" />
      <div className="flex h-[1172px] shrink-0 bg-[#efeef1]">
        <SideStrip />
        <div className="flex w-[2305px] shrink-0 flex-col overflow-hidden">
          <AppHeader />
          <div className={`${LATIN} flex h-[52px] shrink-0 whitespace-nowrap`}>
            <div className="mt-[16px] ml-[23px] w-[1800px] shrink-0 text-[20px] leading-[26px] text-[#6f7c8c]">Apartments Control Report</div>
            <div className="mt-[14px] w-[216px] shrink-0 text-[21.500px] leading-[26px] text-[#3b4a5c]">09:02:11 PM</div>
            <div className="mt-[14px] shrink-0 text-[21.500px] leading-[26px] text-[#3b4a5c]">Monday, 12 December 2022</div>
          </div>
          <div className="ml-[23px] flex grow flex-col bg-white">
            <Filters />
            <ReportTable />
          </div>
        </div>
      </div>
      <Taskbar />
    </div>
  );
}
